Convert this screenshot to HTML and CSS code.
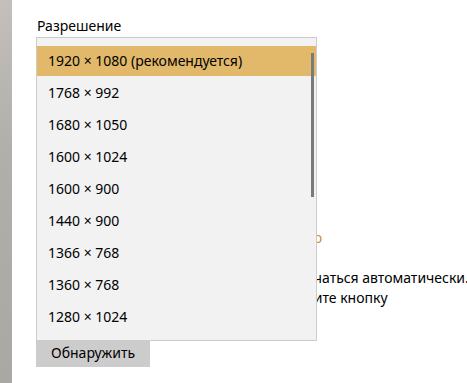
FILE: index.html
```html
<!DOCTYPE html>
<html lang="ru">
<head>
    <meta charset="UTF-8">
    <meta name="viewport" content="width=device-width, initial-scale=1.0">
    <title>Экран</title>
    <link rel="stylesheet" href="styles.css">
</head>
<body>
    <div class="window">
        <div class="side-edge"></div>
        <main class="settings">
            <div class="field">
                <label class="field-label">Разрешение</label>
                <div class="select"></div>

                <ul class="dropdown">
                    <li class="option selected">1920 × 1080 (рекомендуется)</li>
                    <li class="option">1768 × 992</li>
                    <li class="option">1680 × 1050</li>
                    <li class="option">1600 × 1024</li>
                    <li class="option">1600 × 900</li>
                    <li class="option">1440 × 900</li>
                    <li class="option">1366 × 768</li>
                    <li class="option">1360 × 768</li>
                    <li class="option">1280 × 1024</li>
                    <div class="scroll-thumb"></div>
                </ul>
            </div>

            <a class="link" href="#">Подключиться к беспроводному дисплею</a>
            <p class="note">
                <span class="line">Старые дисплеи могут не всегда подключаться автоматически.</span>
                <span class="line">Чтобы попытаться подключить их, нажмите кнопку</span>
            </p>
            <button class="button">Обнаружить</button>
        </main>
    </div>
</body>
</html>
```

FILE: styles.css
```css
body {
    margin: 0;
    background-color: #ffffff;
    font-family: "Noto Sans", "Open Sans", sans-serif;
    font-size: 14px;
    color: #000000;
    overflow: hidden;
}

.window {
    display: flex;
    height: 383px;
}

.side-edge {
    width: 12px;
    flex-shrink: 0;
    background: linear-gradient(to bottom, #c3bfba, #b0afab 40%, #a9a8a4);
}

.settings {
    flex: 1;
    min-width: 0;
    padding: 16px 0 0 25px;
    white-space: nowrap;
    overflow: hidden;
}

.field {
    position: relative;
}

.field-label {
    display: block;
    line-height: 20px;
}

.select {
    width: 279px;
    height: 32px;
    margin-top: 1px;
}

.dropdown {
    position: absolute;
    top: 21px;
    left: -1px;
    width: 281px;
    height: 304px;
    margin: 0;
    padding: 8px 0 0 0;
    list-style: none;
    box-sizing: border-box;
    background: #f2f2f2;
    border: 1px solid #cccccc;
    overflow: hidden;
    z-index: 1;
}

.option {
    height: 30px;
    line-height: 30px;
    margin-bottom: 2px;
    padding-left: 11px;
    color: #000000;
}

.option.selected {
    background: #e2b86a;
}

.scroll-thumb {
    position: absolute;
    top: 15px;
    right: 2px;
    width: 3px;
    height: 144px;
    background: #7a7a7a;
}

.link {
    display: block;
    margin-top: 159px;
    line-height: 20px;
    color: #c9901f;
    text-decoration: none;
}

.note {
    margin: 20px 0 0 0;
    line-height: 20px;
}

.note .line {
    display: block;
}

.button {
    display: block;
    margin: 29px 0 0 -1px;
    height: 30px;
    padding: 0 15px;
    border: none;
    background: #cccccc;
    font-family: inherit;
    font-size: 14px;
    color: #000000;
}
```
